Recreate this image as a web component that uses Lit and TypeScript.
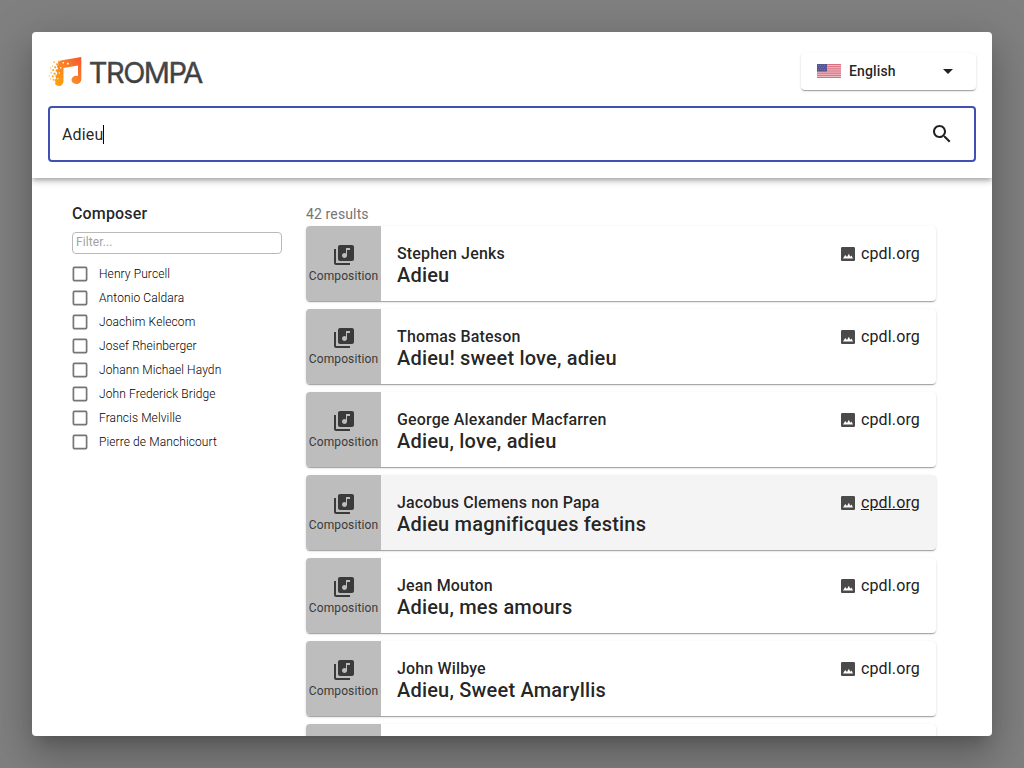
import { LitElement, html, css, svg } from "lit";
import { customElement, property } from "lit/decorators.js";
import { classMap } from "lit/directives/class-map.js";

interface Composition {
  composer: string;
  title: string;
  hovered?: boolean;
}

const RESULTS: (Composition | null)[] = [
  { composer: "Stephen Jenks", title: "Adieu" },
  { composer: "Thomas Bateson", title: "Adieu! sweet love, adieu" },
  { composer: "George Alexander Macfarren", title: "Adieu, love, adieu" },
  { composer: "Jacobus Clemens non Papa", title: "Adieu magnificques festins", hovered: true },
  { composer: "Jean Mouton", title: "Adieu, mes amours" },
  { composer: "John Wilbye", title: "Adieu, Sweet Amaryllis" },
  null,
];

const COMPOSERS = [
  "Henry Purcell",
  "Antonio Caldara",
  "Joachim Kelecom",
  "Josef Rheinberger",
  "Johann Michael Haydn",
  "John Frederick Bridge",
  "Francis Melville",
  "Pierre de Manchicourt",
];

@customElement("trompa-logo")
export class TrompaLogo extends LitElement {
  static styles = css`
    :host { display: block; width: 160px; height: 36px; }
    svg { display: block; }
    .word { font-family: Inter, sans-serif; font-size: 29px; }
  `;

  // Scattered particles on the left of the note: x, y, size, colour
  private bits: [number, number, number, string][] = [
    [5.5, 7.5, 1.6, "#fbb868"], [8.5, 9.5, 2, "#f88f2c"], [10, 6.5, 1.3, "#fbb060"],
    [4, 11.5, 1.3, "#fcc47c"], [6.5, 12.5, 1.8, "#f99a2d"], [10, 12, 2.4, "#f68b22"], [2.2, 13.5, 1.3, "#fcc47c"],
    [4.5, 15.3, 1.8, "#f9a02c"], [8, 15.5, 2.2, "#f7921e"], [2.8, 18.3, 1.4, "#fcb850"], [5.8, 18.8, 2, "#f99b1c"],
    [1, 21.3, 1.2, "#fcc470"], [4, 21.5, 1.8, "#fba320"], [2.2, 24.5, 1.2, "#fdc060"], [5, 25, 1.6, "#fbac38"],
  ];

  render() {
    return html`
      <svg width="160" height="36" viewBox="0 0 160 36" aria-label="TROMPA">
        <defs>
          <linearGradient id="note" x1="0" y1="1" x2="1" y2="0">
            <stop offset="0" stop-color="#ffa800" />
            <stop offset=".5" stop-color="#f9842a" />
            <stop offset="1" stop-color="#f4552e" />
          </linearGradient>
          <linearGradient id="ink" x1="0" y1="0" x2="0" y2="1">
            <stop offset="0" stop-color="#4d4e50" />
            <stop offset="1" stop-color="#353638" />
          </linearGradient>
        </defs>
        <g transform="translate(-.2 .9)">
          <path fill="url(#note)"
            d="M13 6.700 33.500 3V25.300c0 2.800-2.200 4.800-5.100 4.800-2.600 0-4.700-1.600-4.700-3.900 0-2.500 2.200-4.400 5-4.400.5 0 1 .1 1.500.2V11.600L15.700 14.200V27.100c0 2.900-2.100 5-4.600 5-1.500 0-3.100-.6-3.900-1.900l.5-2-1-2.200 1.700-1.500-1-2.700 2.200-1.700-.8-3 1.600-2.100-1.300-2.600 1.700-1.700-.7-2.500z" />
          <path fill="#fff" d="M19.200 8.800h1.700v1.700h-1.700zM14.800 8.200h1.300v1.300h-1.300zM12.200 13.200h1.300v1.300h-1.300zM11 18.300h1.200v1.200H11zM9.500 24.200h1.100v1.100H9.500z" />
          ${this.bits.map(
            ([x, y, s, c]) => svg`<rect x=${x} y=${y} width=${s} height=${s} fill=${c} />`
          )}
        </g>
        <text class="word" x="40.800" y="29.900" textLength="114.500" lengthAdjust="spacing"
          fill="url(#ink)" stroke="#404143" stroke-width=".35">TROMPA</text>
      </svg>
    `;
  }
}

@customElement("result-card")
export class ResultCard extends LitElement {
  @property({ attribute: false }) item: Composition | null = null;

  static styles = css`
    :host { display: block; }
    .card {
      display: flex;
      height: 75px;
      border-radius: 4px;
      overflow: hidden;
      background: #fff;
      box-shadow: 0 2px 1px -1px rgba(0, 0, 0, .2), 0 1px 1px 0 rgba(0, 0, 0, .14), 0 1px 3px 0 rgba(0, 0, 0, .12);
    }
    .hovered { background: #f4f4f4; }
    .kind {
      display: flex;
      flex-direction: column;
      align-items: center;
      width: 75px;
      flex: none;
      box-sizing: border-box;
      padding-top: 17px;
      background: #bdbdbd;
      color: #3a3a3a;
      font-size: 12px;
      line-height: 18px;
      letter-spacing: .12px;
    }
    svg { display: block; fill: currentColor; }
    .body { flex: 1; padding: 17px 16px 0; color: rgba(0, 0, 0, .87); }
    .composer { font-size: 16px; line-height: 22px; font-weight: 500; letter-spacing: .15px; }
    .title { margin-top: -1px; font-size: 20px; line-height: 22px; font-weight: 500; letter-spacing: .19px; }
    .source {
      display: flex;
      align-items: center;
      height: 22px;
      padding: 17px 16px 0 0;
      gap: 5px;
      font-size: 16px;
      letter-spacing: .15px;
      color: #212121;
    }
    .source svg { color: #4a4a4a; }
    .link { line-height: 20px; }
    .hovered .link { text-decoration: underline; }
  `;

  render() {
    if (!this.item) {
      return html`<div class="card"><div class="kind"></div></div>`;
    }
    const { composer, title, hovered } = this.item;
    return html`
      <div class=${classMap({ card: true, hovered: !!hovered })}>
        <div class="kind">
          <svg width="24" height="24" viewBox="0 0 24 24">
            <path d="M20 2H8c-1.100 0-2 .9-2 2v12c0 1.100.9 2 2 2h12c1.100 0 2-.9 2-2V4c0-1.100-.9-2-2-2zm-2 5h-3v5.500c0 1.380-1.120 2.500-2.500 2.500S10 13.880 10 12.500s1.120-2.500 2.500-2.500c.57 0 1.080.19 1.500.51V5h4v2zM4 6H2v14c0 1.100.9 2 2 2h14v-2H4V6z" />
          </svg>
          <span>Composition</span>
        </div>
        <div class="body">
          <div class="composer">${composer}</div>
          <div class="title">${title}</div>
        </div>
        <div class="source">
          <svg width="16" height="16" viewBox="0 0 16 16">
            <path fill-rule="evenodd" d="M2.300 1h11.400c.7 0 1.300.6 1.300 1.300v11.400c0 .7-.6 1.300-1.300 1.300H2.300C1.600 15 1 14.400 1 13.700V2.300C1 1.600 1.600 1 2.300 1zM3 12.500h10l-1.500-3-1.300 1.300L8.900 7.800 7 11 5.200 9z" />
          </svg>
          <span class="link">cpdl.org</span>
        </div>
      </div>
    `;
  }
}

@customElement("app-root")
export class AppRoot extends LitElement {
  static styles = css`
    :host {
      display: block;
      box-sizing: border-box;
      height: 768px;
      padding: 32px;
      overflow: hidden;
      background: #808080;
      font-family: Roboto, sans-serif;
      color: rgba(0, 0, 0, .87);
    }
    .dialog {
      display: flex;
      flex-direction: column;
      height: 704px;
      border-radius: 4px;
      background: #fff;
      box-shadow: 0 11px 15px -7px rgba(0, 0, 0, .2), 0 24px 38px 3px rgba(0, 0, 0, .14), 0 9px 46px 8px rgba(0, 0, 0, .12);
      overflow: hidden;
    }
    .header {
      flex: none;
      height: 146px;
      box-sizing: border-box;
      padding: 21px 16px 16px;
      box-shadow: 0 2px 4px -1px rgba(0, 0, 0, .2), 0 4px 5px 0 rgba(0, 0, 0, .14), 0 1px 10px 0 rgba(0, 0, 0, .12);
    }
    .top { display: flex; justify-content: space-between; height: 53px; }
    .language {
      display: flex;
      align-items: center;
      box-sizing: border-box;
      width: 175px;
      height: 37px;
      padding: 0 16px;
      border-radius: 4px;
      font-size: 14px;
      font-weight: 500;
      letter-spacing: .13px;
      box-shadow: 0 2px 1px -1px rgba(0, 0, 0, .2), 0 1px 1px 0 rgba(0, 0, 0, .14), 0 1px 3px 0 rgba(0, 0, 0, .12);
    }
    .language svg { margin-top: -1px; }
    .language span { flex: 1; margin: -1px 0 0 8px; }
    svg { display: block; }
    .search {
      display: flex;
      align-items: center;
      box-sizing: border-box;
      height: 56px;
      padding: 0 20px 0 12px;
      border: 2px solid #3f51b5;
      border-radius: 4px;
      font-size: 16px;
      letter-spacing: .15px;
    }
    .caret { width: 1px; height: 19px; background: #000; }
    .search svg { margin-left: auto; }
    .content { display: flex; flex: 1; min-height: 0; padding: 24px 56px 0 40px; gap: 24px; }
    .facets { width: 210px; flex: none; }
    .heading { font-size: 16px; line-height: 24px; font-weight: 500; letter-spacing: .15px; }
    .filter {
      box-sizing: border-box;
      height: 22px;
      margin: 6px 0 8px;
      padding-left: 3px;
      border: 1px solid #b9b9b9;
      border-radius: 4px;
      font-size: 12px;
      line-height: 18px;
      letter-spacing: .1px;
      color: #a2a2a2;
    }
    .option {
      display: flex;
      align-items: center;
      height: 24px;
      gap: 11px;
      font-size: 12px;
      font-weight: 300;
      letter-spacing: .1px;
      color: #000;
    }
    .results { width: 630px; }
    .count { height: 24px; font-size: 14px; line-height: 24px; letter-spacing: .13px; color: #757575; }
    .list { display: flex; flex-direction: column; gap: 8px; }
  `;

  private flag() {
    return html`
      <svg width="24" height="14" viewBox="0 0 24 14">
        <rect width="24" height="14" fill="#efbfc6" />
        ${[0, 1, 2, 3, 4, 5, 6].map((i) => svg`<rect y=${i * 2.154} width="24" height="1.077" fill="#d9707f" />`)}
        <rect width="10" height="7.500" fill="#575591" />
        ${[1, 3, 5].map((y) =>
          [1, 3, 5, 7].map((x) => svg`<rect x=${x + (y === 3 ? 1 : 0)} y=${y} width=".8" height=".8" fill="#8583b5" />`)
        )}
      </svg>
    `;
  }

  private checkbox() {
    return html`
      <svg width="16" height="16" viewBox="0 0 16 16">
        <rect x="1.400" y="1.400" width="13.200" height="13.200" rx="1" fill="none" stroke="#757575" stroke-width="1.700" />
      </svg>
    `;
  }

  render() {
    return html`
      <div class="dialog">
        <div class="header">
          <div class="top">
            <trompa-logo></trompa-logo>
            <div class="language">
              ${this.flag()}
              <span>English</span>
              <svg width="24" height="24" viewBox="0 0 24 24"><path fill="#212121" d="M7 10l5 5 5-5z" /></svg>
            </div>
          </div>
          <div class="search">
            <span>Adieu</span><i class="caret"></i>
            <svg width="24" height="24" viewBox="0 0 24 24">
              <path fill="#212121" d="M15.500 14h-.79l-.28-.27C15.410 12.590 16 11.110 16 9.500 16 5.910 13.090 3 9.500 3S3 5.910 3 9.500 5.910 16 9.500 16c1.610 0 3.090-.59 4.230-1.570l.27.28v.79l5 4.990L20.490 19l-4.990-5zm-6 0C7.010 14 5 11.990 5 9.500S7.010 5 9.500 5 14 7.010 14 9.500 11.990 14 9.500 14z" />
            </svg>
          </div>
        </div>
        <div class="content">
          <div class="facets">
            <div class="heading">Composer</div>
            <div class="filter">Filter...</div>
            ${COMPOSERS.map((name) => html`<div class="option">${this.checkbox()}${name}</div>`)}
          </div>
          <div class="results">
            <div class="count">42 results</div>
            <div class="list">
              ${RESULTS.map((item) => html`<result-card .item=${item}></result-card>`)}
            </div>
          </div>
        </div>
      </div>
    `;
  }
}
